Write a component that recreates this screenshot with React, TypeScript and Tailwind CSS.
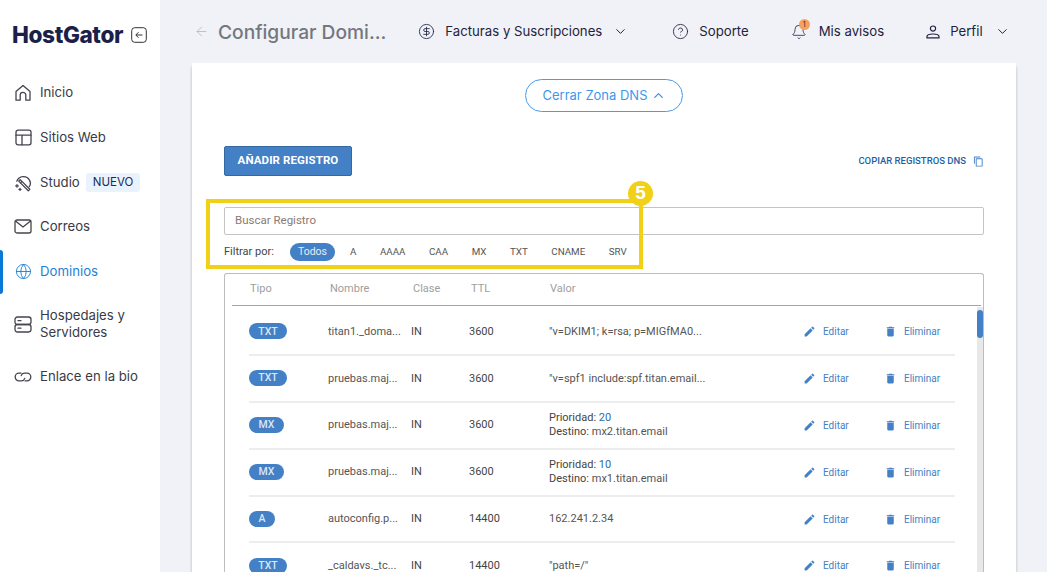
import { ArrowLeft, ChevronDown, ChevronUp, CircleDollarSign, CircleHelp, Bell, Globe } from "lucide-react";
import type { ReactNode } from "react";

const ic = { fill: "none", stroke: "#44444c", strokeWidth: 1.3, strokeLinecap: "round" as const, strokeLinejoin: "round" as const };

function HomeIcon() {
  return (
    <svg width="18" height="18" viewBox="0 0 18 18" {...ic}>
      <path d="M2 16.2V7.6L9 1.6l7 6v8.6h-4.2v-5a2.8 2.8 0 0 0-5.6 0v5Z" />
    </svg>
  );
}
function LayoutIcon() {
  return (
    <svg width="17" height="17" viewBox="0 0 17 17" {...ic}>
      <rect x="1" y="1.2" width="15" height="14.6" rx="2" />
      <path d="M1 6.2h15M7 6.2v9.6" />
    </svg>
  );
}
function StudioIcon() {
  return (
    <svg width="18" height="18" viewBox="0 0 18 18" {...ic}>
      <path d="M2.8 7.2A7 7 0 0 1 15.6 6.4c1.2 2.4.9 4.6-.3 6.2" />
      <path d="m6.2 5.6 9.6 9.6-1.5 1.5-9.6-9.6Z M8 7.4 6.4 9" />
      <path d="M3 10.6v2.6M1.7 11.9h2.6M6 14.4v2M5 15.4h2" />
    </svg>
  );
}
function MailIcon() {
  return (
    <svg width="18" height="15" viewBox="0 0 18 15" {...ic}>
      <rect x="1" y="1" width="16" height="13" rx="2" />
      <path d="m1.5 2 7.5 6 7.5-6" />
    </svg>
  );
}
function ServerIcon() {
  return (
    <svg width="18" height="17" viewBox="0 0 18 17" {...ic}>
      <rect x="1" y="1" width="16" height="7.5" rx="2.4" />
      <rect x="1" y="8.5" width="16" height="7.5" rx="2.4" />
      <path d="M4 4.7h3M4 12.2h3" />
    </svg>
  );
}
function LinkIcon() {
  return (
    <svg width="18" height="10" viewBox="0 0 18 10" {...ic}>
      <path d="M7 1.2H5a3.8 3.8 0 0 0 0 7.6h2.6a3.6 3.6 0 0 0 3.2-2.4" />
      <path d="M11 8.8h2a3.8 3.8 0 0 0 0-7.6h-2.6a3.6 3.6 0 0 0-3.2 2.4" />
    </svg>
  );
}
function PersonIcon() {
  return (
    <svg width="14" height="14" viewBox="0 0 14 14" fill="none" stroke="#1f2340" strokeWidth="1.2">
      <circle cx="7" cy="3.6" r="2.6" />
      <path d="M1 12.8v-1.2c0-1.6 2.8-2.6 6-2.6s6 1 6 2.6v1.2Z" />
    </svg>
  );
}
function EditIcon() {
  return (
    <svg width="13" height="13" viewBox="0 0 24 24" fill="#4480c5">
      <path d="M3 17.25V21h3.75L17.81 9.94l-3.75-3.75L3 17.25zM20.71 7.04a1 1 0 0 0 0-1.41l-2.34-2.34a1 1 0 0 0-1.41 0l-1.83 1.83 3.75 3.75 1.83-1.83z" />
    </svg>
  );
}
function DeleteIcon() {
  return (
    <svg width="13" height="13" viewBox="0 0 24 24" fill="#4480c5">
      <path d="M6 19c0 1.1.9 2 2 2h8c1.1 0 2-.9 2-2V7H6v12zM19 4h-3.5l-1-1h-5l-1 1H5v2h14V4z" />
    </svg>
  );
}
function CopyIcon() {
  return (
    <svg width="11" height="11" viewBox="0 0 24 24" fill="#4480c5">
      <path d="M16 1H4c-1.1 0-2 .9-2 2v14h2V3h12V1zm3 4H8c-1.1 0-2 .9-2 2v14c0 1.1.9 2 2 2h11c1.1 0 2-.9 2-2V7c0-1.1-.9-2-2-2zm0 16H8V7h11v14z" />
    </svg>
  );
}

function NavItem({ icon, children, active, className }: { icon: ReactNode; children: ReactNode; active?: boolean; className?: string }) {
  return (
    <div className={`relative flex items-center pl-[14px] gap-[8px] text-[13.2px] leading-[17px] ${active ? "text-[#1f7fd6]" : "text-[#3a3a48]"} ${className ?? ""}`}>
      {active && <span className="absolute left-0 top-1/2 -translate-y-1/2 w-[3px] h-[44px] bg-[#0a78d6] rounded-r-sm" />}
      <span className="w-[18px] flex justify-center shrink-0">{icon}</span>
      <div>{children}</div>
    </div>
  );
}

const rows = [
  { t: "TXT", w: "w-[38px]", n: "titan1._doma...", ttl: "3600", v: '"v=DKIM1; k=rsa; p=MIGfMA0...' },
  { t: "TXT", w: "w-[38px]", n: "pruebas.maj...", ttl: "3600", v: '"v=spf1 include:spf.titan.email...' },
  { t: "MX", w: "w-[35px]", n: "pruebas.maj...", ttl: "3600", p: "20", d: "mx2.titan.email" },
  { t: "MX", w: "w-[35px]", n: "pruebas.maj...", ttl: "3600", p: "10", d: "mx1.titan.email" },
  { t: "A", w: "w-[26px]", n: "autoconfig.p...", ttl: "14400", v: "162.241.2.34" },
  { t: "TXT", w: "w-[38px]", n: "_caldavs._tc...", ttl: "14400", v: '"path=/"' },
];

const filters = ["A", "AAAA", "CAA", "MX", "TXT", "CNAME", "SRV"];

export default function App() {
  return (
    <div className="relative w-[1047px] h-[572px] overflow-hidden flex bg-[#f0f2f7] font-['Inter',sans-serif]">
      <aside className="w-[160px] shrink-0 bg-white flex flex-col">
        <div className="flex items-center pl-[12px] h-[70px] gap-[8px]">
          <span className="font-['Inter',sans-serif] font-extrabold text-[22.6px] tracking-[-0.4px] text-[#1b1f4b] leading-none">HostGator</span>
          <svg width="16" height="16" viewBox="0 0 16 16" fill="none" stroke="#333" strokeWidth="1">
            <rect x="0.7" y="0.7" width="14.6" height="14.6" rx="3" />
            <path d="M11.5 8H5M7.5 5.2 4.8 8l2.7 2.8" />
          </svg>
        </div>
        <div className="flex flex-col mt-[9px]">
          <NavItem className="h-[27px]" icon={<HomeIcon />}>Inicio</NavItem>
          <NavItem className="h-[27px] mt-[18px]" icon={<LayoutIcon />}>Sitios Web</NavItem>
          <NavItem className="h-[27px] mt-[18px]" icon={<StudioIcon />}>
            <div className="flex items-center gap-[6px]">Studio<span className="bg-[#e8f3fd] text-[#1b2a5c] text-[11.5px] rounded-[3px] h-[19px] px-[7px] flex items-center">NUEVO</span></div>
          </NavItem>
          <NavItem className="h-[27px] mt-[17px]" icon={<MailIcon />}>Correos</NavItem>
          <NavItem active className="h-[27px] mt-[18px]" icon={<Globe size={17} strokeWidth={1.3} />}>Dominios</NavItem>
          <NavItem className="h-[34px] mt-[22px]" icon={<ServerIcon />}>Hospedajes y<br />Servidores</NavItem>
          <NavItem className="h-[27px] mt-[22px]" icon={<LinkIcon />}>Enlace en la bio</NavItem>
        </div>
      </aside>

      <main className="flex-1 flex flex-col min-w-0">
        <header className="h-[63px] shrink-0 flex items-center text-[13.2px] text-[#1f2340]">
          <ArrowLeft size={15} strokeWidth={1.3} className="ml-[34px] text-[#a9b6cc]" />
          <span className="ml-[9px] text-[19.2px] font-medium text-[#73777f] pt-[1px]">Configurar Domi...</span>
          <CircleDollarSign size={17} strokeWidth={1.2} className="ml-[32px]" />
          <span className="ml-[10px]">Facturas y Suscripciones</span>
          <ChevronDown size={15} strokeWidth={1.6} className="ml-[11px]" />
          <CircleHelp size={17} strokeWidth={1.2} className="ml-[44px]" />
          <span className="ml-[10px]">Soporte</span>
          <span className="relative ml-[42px]">
            <Bell size={16} strokeWidth={1.2} />
            <span className="absolute -top-[5px] left-[8px] w-[11px] h-[11px] rounded-full bg-[#f6a25f] text-[7px] flex items-center justify-center leading-none">1</span>
          </span>
          <span className="ml-[12px]">Mis avisos</span>
          <span className="ml-[42px]"><PersonIcon /></span>
          <span className="ml-[10px]">Perfil</span>
          <ChevronDown size={15} strokeWidth={1.6} className="ml-[12px]" />
        </header>

        <section className="relative ml-[32px] w-[824px] flex-1 bg-white shadow-[0_4px_3px_rgba(0,0,0,0.25)] overflow-hidden font-['Roboto',sans-serif]">
          <div className="flex justify-center pt-[16px]">
            <div className="w-[158px] h-[33px] rounded-full border border-[#4a9ae8] text-[#3f97ec] text-[13px] font-['Inter',sans-serif] flex items-center justify-center gap-[3px]">
              Cerrar Zona DNS <ChevronUp size={15} strokeWidth={2.2} />
            </div>
          </div>
          <div className="flex items-center justify-between mt-[34px] pl-[32px] pr-[32px]">
            <div className="w-[128px] h-[30px] bg-[#4480c5] border border-[#35689f] rounded-[2px] text-white text-[11.5px] font-bold tracking-[0.1px] flex items-center justify-center">AÑADIR REGISTRO</div>
            <div className="flex items-center gap-[7px] text-[9.5px] font-medium text-[#1d5fa3]">COPIAR REGISTROS DNS <CopyIcon /></div>
          </div>
          <div className="mt-[31px] mx-[32px] h-[28px] border border-[#c4c4c4] rounded-[2px] flex items-center pl-[10px] text-[11.5px] text-[#8a7a72]">Buscar Registro</div>
          <div className="mt-[8px] mx-[32px] flex items-center h-[18px] text-[11px] text-[#444]">
            <span className="w-[66px]">Filtrar por:</span>
            <span className="h-[18px] w-[45px] rounded-full bg-[#4480c5] text-[#e4edf7] text-[10.5px] flex items-center justify-center">Todos</span>
            <div className="flex text-[9.8px] text-[#555] ml-[15px] gap-[23.5px]">
              {filters.map((f) => <span key={f}>{f}</span>)}
            </div>
          </div>
          <div className="mt-[12px] mx-[32px] border border-b-0 border-[#bdbdbd] rounded-t-[3px] h-[400px] relative">
            <div className="ml-[7px] mr-[2px] h-[32px] border-b border-[#9aa5ad] grid grid-cols-[80px_83px_58px_79px_1fr] pl-[18px] items-center text-[11px] text-[#9e9e9e]">
              <span>Tipo</span><span>Nombre</span><span>Clase</span><span>TTL</span><span>Valor</span>
            </div>
            <div className="ml-[24px] mr-[28px] pt-[3px]">
              {rows.map((r, i) => (
                <div key={i} className="grid grid-cols-[79px_83px_58px_80px_254px_81px_1fr] items-center h-[46.9px] border-b-2 border-[#ededed] text-[11px] text-[#555]">
                  <span className={`${r.w} h-[16px] rounded-full bg-[#4480c5] text-[#dbe7f5] text-[10.5px] font-medium flex items-center justify-center`}>{r.t}</span>
                  <span className="pt-[1px]">{r.n}</span>
                  <span className="pt-[1px] text-[#444]">IN</span>
                  <span className="pt-[1px] text-[#444]">{r.ttl}</span>
                  {r.v ? <span className="pt-[1px]">{r.v}</span> : (
                    <span className="leading-[14px]"><span className="text-[#444]">Prioridad:</span> <span className="text-[#2e6ca8]">{r.p}</span><br /><span className="text-[#444]">Destino:</span> {r.d}</span>
                  )}
                  <span className="flex items-center gap-[7px] text-[10px] text-[#4480c5]"><EditIcon />Editar</span>
                  <span className="flex items-center gap-[7px] text-[10px] text-[#4480c5]"><DeleteIcon />Eliminar</span>
                </div>
              ))}
            </div>
            <div className="absolute right-0 top-[33px] bottom-0 w-[6px] bg-[#e8e8e8]">
              <div className="mt-[3px] h-[28px] rounded-full bg-[#4480c5]" />
            </div>
          </div>
        </section>
      </main>

      <div className="absolute left-[206px] top-[199px] w-[437px] h-[70px] border-[4px] border-[#f2d016]" />
      <div className="absolute left-[628px] top-[181px] w-[25px] h-[25px] rounded-full bg-[#f2d016] text-white font-bold text-[19px] flex items-center justify-center font-['Liberation_Sans',sans-serif]">5</div>
    </div>
  );
}
